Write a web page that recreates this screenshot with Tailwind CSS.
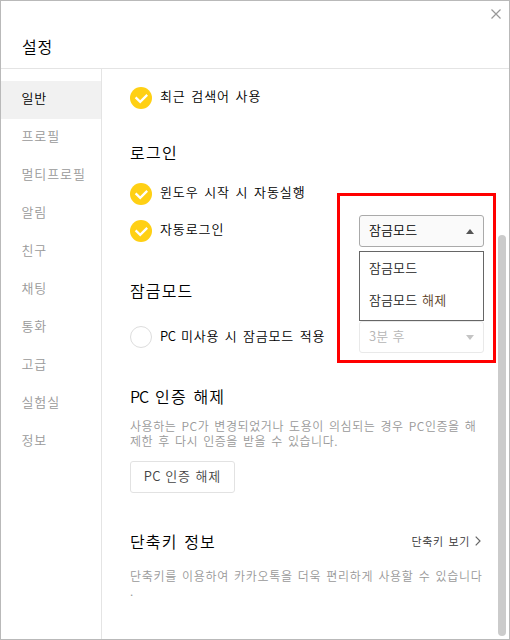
<!DOCTYPE html>
<html lang="ko">
<head>
    <meta charset="UTF-8">
    <meta name="viewport" content="width=device-width, initial-scale=1.0">
    <title>설정</title>
    <script src="https://cdn.jsdelivr.net/npm/@tailwindcss/browser@4"></script>
</head>
<body class="bg-white font-['Noto_Sans_CJK_KR',sans-serif] font-[350] text-black">
    <div class="relative flex h-[640px] w-[510px] flex-col overflow-hidden border border-[#b9b9b9] bg-white">
        <!-- 헤더 -->
        <header class="flex h-[68px] shrink-0 items-start justify-between border-b border-[#e4e4e4] pl-[21px] pr-2">
            <h1 class="mt-[33px] text-[16px] leading-6 tracking-[0.8px]">설정</h1>
            <svg class="mt-2 size-[10px]" viewBox="0 0 10 10" fill="none" stroke="#999" stroke-width="1.2"><path d="M.5 .5l9 9M9.5 .5l-9 9"/></svg>
        </header>

        <div class="flex min-h-0 flex-1">
            <!-- 사이드 메뉴 -->
            <nav class="w-[101px] shrink-0 border-r border-[#e4e4e4] pt-3 text-[13px] tracking-[0.9px] text-[#999]">
                <div class="flex h-[38px] items-center bg-[#f1f1f1] pb-1 pl-[20.5px] text-black">일반</div>
                <div class="flex h-[38px] items-center pb-1 pl-[20.5px]">프로필</div>
                <div class="flex h-[38px] items-center pb-1 pl-[20.5px]">멀티프로필</div>
                <div class="flex h-[38px] items-center pb-1 pl-[20.5px]">알림</div>
                <div class="flex h-[38px] items-center pb-1 pl-[20.5px]">친구</div>
                <div class="flex h-[38px] items-center pb-1 pl-[20.5px]">채팅</div>
                <div class="flex h-[38px] items-center pb-1 pl-[20.5px]">통화</div>
                <div class="flex h-[38px] items-center pb-1 pl-[20.5px]">고급</div>
                <div class="flex h-[38px] items-center pb-1 pl-[20.5px]">실험실</div>
                <div class="flex h-[38px] items-center pb-1 pl-[20.5px]">정보</div>
            </nav>

            <!-- 설정 내용 -->
            <main class="min-w-0 flex-1 whitespace-nowrap pl-7 pr-[25px] text-[13px] tracking-[0.9px] [word-spacing:1.1px]">
                <div class="mt-[18px] flex h-[22px] items-center">
                    <svg class="mr-2 size-[22px]" viewBox="0 0 22 22" fill="none"><circle cx="11" cy="11" r="11" fill="#ffd014"/><path d="M5.6 10.4l4.6 4.4 7-6.9" stroke="#fff" stroke-width="2.3"/></svg>
                    <span class="pb-1">최근 검색어 사용</span>
                </div>

                <h2 class="mt-[31px] h-6 text-[16px] leading-6 tracking-[1.3px]">로그인</h2>
                <div class="mt-[19px] flex h-[22px] items-center">
                    <svg class="mr-2 size-[22px]" viewBox="0 0 22 22" fill="none"><circle cx="11" cy="11" r="11" fill="#ffd014"/><path d="M5.6 10.4l4.6 4.4 7-6.9" stroke="#fff" stroke-width="2.3"/></svg>
                    <span class="pb-1">윈도우 시작 시 자동실행</span>
                </div>
                <div class="mt-[15px] flex h-[22px] items-center">
                    <svg class="mr-2 size-[22px]" viewBox="0 0 22 22" fill="none"><circle cx="11" cy="11" r="11" fill="#ffd014"/><path d="M5.6 10.4l4.6 4.4 7-6.9" stroke="#fff" stroke-width="2.3"/></svg>
                    <span class="pb-1">자동로그인</span>
                    <div class="relative ml-auto flex h-8 w-[125px] shrink-0 items-center justify-between rounded-[3px] border border-[#aaa] bg-[#fafafa] px-[9px] tracking-[0.1px]">
                        <span class="pb-[3px]">잠금모드</span>
                        <svg class="h-[5px] w-2" viewBox="0 0 8 5"><path d="M4 0l4 5H0z" fill="#555"/></svg>
                        <!-- 펼쳐진 목록 -->
                        <div class="absolute -left-px top-[35px] z-10 h-[70px] w-[125px] border border-[#666] bg-white pl-[9px] leading-8 text-[#222]">
                            <div>잠금모드</div>
                            <div>잠금모드 <span class="text-[#5a3c1c]">해제</span></div>
                        </div>
                    </div>
                </div>

                <h2 class="mt-9 h-6 text-[16px] leading-6 tracking-[1.1px]">잠금모드</h2>
                <div class="mt-6 flex h-[22px] items-center">
                    <span class="mr-2 size-[22px] rounded-full border border-[#ddd]"></span>
                    <span class="pb-[3px] tracking-[0.8px]"><span class="tracking-[-0.5px]">PC</span> 미사용 시 잠금모드 적용</span>
                    <div class="ml-auto flex h-8 w-[125px] shrink-0 items-center justify-between rounded-[3px] border border-[#e9e9e9] px-[9px] tracking-[0.1px] text-[#b5b5b5]">
                        <span class="pb-[3px] [word-spacing:0.5px]">3분 후</span>
                        <svg class="h-[5px] w-2" viewBox="0 0 8 5"><path d="M0 0h8L4 5z" fill="#c4c4c4"/></svg>
                    </div>
                </div>

                <h2 class="mt-9 h-6 text-[16px] leading-6 tracking-[1.1px]"><span class="tracking-[-0.9px]">PC</span> 인증 해제</h2>
                <p class="mt-[10px] text-[12px] leading-[15px] tracking-[0.57px] text-[#999]">사용하는 PC가 변경되었거나 도용이 의심되는 경우 PC인증을 해<br>제한 후 다시 인증을 받을 수 있습니다.</p>
                <button class="mt-[13px] flex h-8 w-[105px] items-center justify-center rounded-[3px] border border-[#e2e2e2] pb-[3px] text-[#444]"><span><span class="tracking-[0.2px]">PC</span> 인증 해제</span></button>

                <div class="mt-9 flex h-6 items-center justify-between">
                    <h2 class="text-[16px] leading-6 tracking-[1.1px]">단축키 정보</h2>
                    <span class="flex items-center pr-[3px] text-[11px] tracking-[0.6px] text-[#333]">단축키 보기
                        <svg class="ml-[5px] h-[10px] w-[6px]" viewBox="0 0 6 10" fill="none" stroke="#666" stroke-width="1.2"><path d="M.7 .7L5 5 .7 9.3"/></svg>
                    </span>
                </div>
                <p class="mt-[15px] text-[12px] leading-[15px] tracking-[0.68px] text-[#999]">단축키를 이용하여 카카오톡을 더욱 편리하게 사용할 수 있습니다<br>.</p>
            </main>
        </div>

        <!-- 스크롤바 -->
        <div class="absolute left-[497px] top-[234px] h-[401px] w-2 rounded-full bg-[#cbcbcb]"></div>
        <!-- 강조 영역 -->
        <div class="absolute left-[336px] top-[192px] z-20 h-[170px] w-[159px] border-3 border-[#f00]"></div>
    </div>
</body>
</html>
